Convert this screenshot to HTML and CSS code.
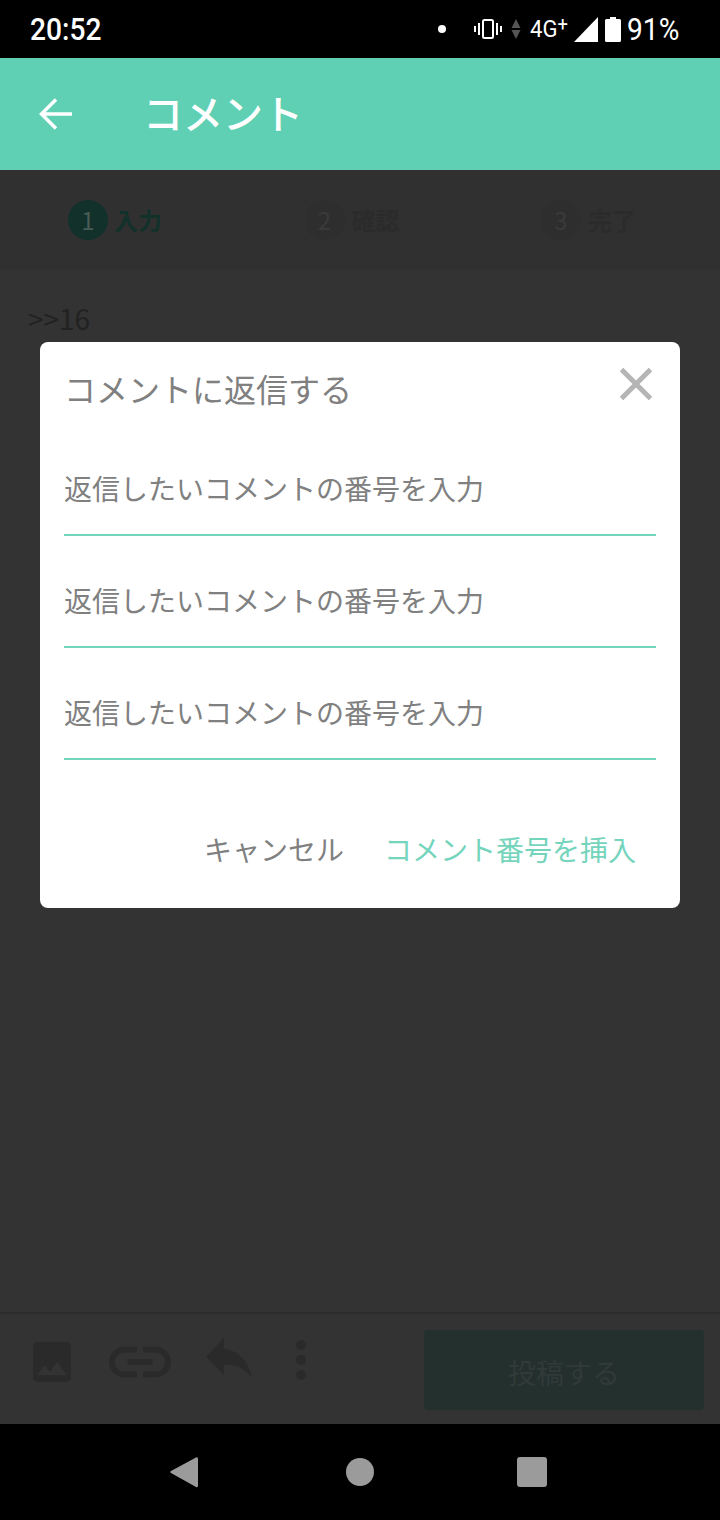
FILE: index.html
```html
<!DOCTYPE html>
<html lang="ja">
<head>
<meta charset="utf-8">
<title>コメント</title>
<link rel="stylesheet" href="styles.css">
</head>
<body>
<div class="app">
  <div class="status">
    <span class="clock">20:52</span>
    <div class="status-right">
      <span class="dot"></span>
      <svg class="ic-vib" viewBox="0 0 28 20" width="28" height="20"><rect x="9" y="1" width="10" height="18" rx="1.500" fill="none" stroke="#fff" stroke-width="2"/><path d="M5 4v12M1 7v6M23 4v12M27 7v6" stroke="#fff" stroke-width="2" fill="none"/></svg>
      <svg class="ic-arrows" viewBox="0 0 10 20" width="10" height="20"><path d="M5 0l4.500 9h-9zM5 20l4.500-9h-9z" fill="#555"/></svg>
      <span class="net">4G<sup>+</sup></span>
      <svg class="ic-sig" viewBox="0 0 24 25" width="24" height="25"><path d="M24 0v25H0z" fill="#fff"/></svg>
      <svg class="ic-bat" viewBox="0 0 16 25" width="16" height="25"><path d="M5 0h6v2h3.500a1.500 1.500 0 0 1 1.500 1.500V23.500a1.500 1.500 0 0 1-1.500 1.500H1.500A1.500 1.500 0 0 1 0 23.500V3.500A1.500 1.500 0 0 1 1.500 2H5z" fill="#fff"/></svg>
      <span class="pct">91%</span>
    </div>
  </div>

  <header class="topbar">
    <svg class="back" viewBox="0 0 34 32" width="34" height="32"><path d="M33 16H3M17 1.500L2.500 16 17 30.500" fill="none" stroke="#fff" stroke-width="3.500"/></svg>
    <h1 class="title">コメント</h1>
  </header>

  <main class="page">
    <div class="steps">
      <div class="step step-on"><span class="num">1</span><span class="lbl">入力</span></div>
      <div class="step"><span class="num">2</span><span class="lbl">確認</span></div>
      <div class="step"><span class="num">3</span><span class="lbl">完了</span></div>
    </div>
    <div class="body-text">&gt;&gt;16</div>
    <div class="toolbar">
      <div class="tools">
        <svg class="ic-img" viewBox="3 3 18 18" width="38" height="40" preserveAspectRatio="none"><path d="M21 19V5c0-1.100-.9-2-2-2H5c-1.100 0-2 .9-2 2v14c0 1.100.9 2 2 2h14c1.100 0 2-.9 2-2zM8.500 13.500l2.500 3.010L14.500 12l4.500 6H5l3.500-4.500z"/></svg>
        <svg class="ic-link" viewBox="2 7 20 10" width="62" height="32"><path d="M3.900 12c0-1.710 1.390-3.100 3.100-3.100h4V7H7c-2.760 0-5 2.240-5 5s2.240 5 5 5h4v-1.900H7c-1.710 0-3.100-1.390-3.100-3.100zM8 13h8v-2H8v2zm9-6h-4v1.900h4c1.710 0 3.100 1.390 3.100 3.100s-1.390 3.100-3.100 3.100h-4V17h4c2.760 0 5-2.240 5-5s-2.240-5-5-5z"/></svg>
        <svg class="ic-reply" viewBox="3 5 18 15" width="46" height="40" preserveAspectRatio="none"><path d="M10 9V5l-7 7 7 7v-4.100c5 0 8.500 1.600 11 5.100-1-5-4-10-11-11z"/></svg>
        <svg class="ic-more" viewBox="0 0 10 40" width="10" height="40"><circle cx="5" cy="5" r="5"/><circle cx="5" cy="20" r="5"/><circle cx="5" cy="35" r="5"/></svg>
      </div>
      <div class="post">投稿する</div>
    </div>
  </main>

  <nav class="navbar">
    <svg viewBox="0 0 28 32" width="28" height="32"><path d="M26 1.500a1.500 1.500 0 0 1 2 1V30a1.500 1.500 0 0 1-2 1L1 17a1.200 1.200 0 0 1 0-2z" fill="#9b9b9b"/></svg>
    <span class="nav-home"></span>
    <span class="nav-recent"></span>
  </nav>

  <div class="modal">
    <div class="modal-head">
      <h2 class="modal-title">コメントに返信する</h2>
      <svg class="close" viewBox="0 0 32 32" width="32" height="32"><path d="M1.500 1.500l29 29M30.500 1.500l-29 29" stroke="#b5b5b5" stroke-width="5" fill="none"/></svg>
    </div>
    <input class="field" placeholder="返信したいコメントの番号を入力">
    <input class="field" placeholder="返信したいコメントの番号を入力">
    <input class="field" placeholder="返信したいコメントの番号を入力">
    <div class="actions">
      <span class="act">キャンセル</span>
      <span class="act act-main">コメント番号を挿入</span>
    </div>
  </div>
</div>
</body>
</html>
```
FILE: styles.css
```css
* { box-sizing: border-box; }
html, body { margin: 0; padding: 0; background: #000; }
body { font-family: "Noto Sans CJK JP", "Noto Sans", sans-serif; }
.app { position: relative; width: 720px; height: 1520px; display: flex; flex-direction: column; overflow: hidden; }

.status { height: 58px; background: #000; color: #fff; display: flex; align-items: center; justify-content: space-between; padding: 0 41px 0 30px; font-family: Roboto, sans-serif; flex: none; }
.clock { font-size: 32px; font-weight: 500; line-height: 58px; display: inline-block; transform: scaleX(.88); transform-origin: left center; }
.status-right { display: flex; align-items: center; }
.dot { width: 8px; height: 8px; border-radius: 50%; background: #fff; margin-right: 28px; }
.ic-vib { margin-right: 9px; }
.ic-arrows { margin-right: 9px; }
.net { font-size: 24px; line-height: 30px; width: 44px; display: inline-block; white-space: nowrap; transform: scaleX(.92); transform-origin: left center; }
.net sup { font-size: 20px; line-height: 0; vertical-align: 6px; }
.ic-bat { margin-left: 7px; margin-right: 6px; }
.pct { font-size: 32px; font-weight: 400; line-height: 58px; width: 52px; display: inline-block; white-space: nowrap; transform: scaleX(.88); transform-origin: left center; }

.topbar { height: 112px; background: #5fd0b4; display: flex; align-items: center; padding-left: 39px; flex: none; }
.back { margin-right: 70px; }
.title { margin: 0 0 4px; color: #fff; font-size: 40px; font-weight: 500; line-height: 1; }

.page { flex: 1; background: #333; display: flex; flex-direction: column; min-height: 0; }
.steps { height: 100px; background: #303030; padding-left: 68px; display: grid; grid-template-columns: repeat(3, 236.5px); align-items: center; flex: none; }
.step { display: flex; align-items: center; gap: 7px; color: #2b2b2b; }
.num { width: 40px; height: 40px; border-radius: 50%; background: #2e2e2e; color: #3a3a3a; font-size: 24px; line-height: 40px; text-align: center; }
.lbl { font-size: 24px; font-weight: 700; line-height: 40px; }
.step-on { color: #12312a; gap: 6px; }
.step-on .num { background: #12312a; color: #4a5a56; }
.body-text { flex: 1; padding: 26px 28px 0; font-size: 28px; line-height: 44px; color: #222; }

.toolbar { height: 112px; border-top: 2px solid #2c2c2c; display: flex; align-items: center; justify-content: space-between; padding: 2px 16px 0 33px; flex: none; }
.tools { display: flex; align-items: center; margin-top: -17px; }
.tools svg { fill: #2a2a2a; display: block; }
.ic-img { margin-right: 38px; }
.ic-link { margin-right: 35px; }
.ic-reply { margin-right: 44px; margin-top: -8px; }
.ic-more { margin-top: -4px; }
.post { width: 280px; height: 80px; border-radius: 4px; background: #24302e; color: #303a38; font-size: 28px; line-height: 84px; text-align: center; }

.navbar { height: 96px; background: #000; flex: none; display: flex; align-items: center; padding-left: 170px; }
.nav-home { width: 28px; height: 28px; border-radius: 50%; background: #9b9b9b; margin-left: 148px; }
.nav-recent { width: 30px; height: 30px; border-radius: 3px; background: #9b9b9b; margin-left: 143px; }

.modal { position: absolute; left: 40px; top: 342px; width: 640px; height: 566px; background: #fff; border-radius: 8px; padding: 0 24px; display: flex; flex-direction: column; }
.modal-head { height: 82px; display: flex; justify-content: space-between; flex: none; }
.modal-title { margin: 0; font-size: 32px; font-weight: 400; line-height: 92px; color: #808080; }
.close { margin: 26px 4px 0 0; flex: none; }
.field { display: block; width: 100%; height: 112px; flex: none; border: 0; border-bottom: 2px solid #74d4bc; outline: 0; padding: 18px 0 0; background: transparent; font-family: inherit; font-size: 28px; color: #808080; }
.field::placeholder { color: #808080; opacity: 1; }
.actions { display: flex; justify-content: flex-end; gap: 40px; padding: 64px 20px 0 0; }
.act { font-size: 28px; line-height: 50px; color: #808080; }
.act-main { color: #74d4bc; }
```
